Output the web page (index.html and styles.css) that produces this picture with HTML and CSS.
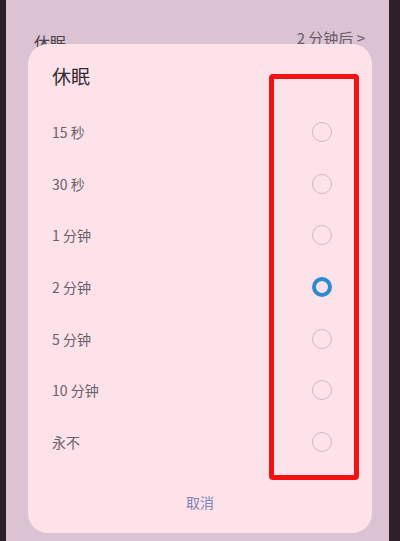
FILE: index.html
```html
<!DOCTYPE html>
<html lang="zh">
<head>
    <meta charset="UTF-8">
    <title>休眠</title>
    <link rel="stylesheet" href="styles.css">
</head>
<body>
    <div class="phone">
        <div class="bezel bezel-left"></div>
        <div class="screen">
            <div class="bg-row">
                <span>休眠</span>
                <span class="bg-value">2 分钟后 &gt;</span>
            </div>
        </div>
        <div class="bezel bezel-right"></div>
    </div>

    <div class="dialog">
        <div class="dialog-title">休眠</div>
        <div class="option"><span>15 秒</span><span class="radio"></span></div>
        <div class="option"><span>30 秒</span><span class="radio"></span></div>
        <div class="option"><span>1 分钟</span><span class="radio"></span></div>
        <div class="option"><span>2 分钟</span><span class="radio checked"></span></div>
        <div class="option"><span>5 分钟</span><span class="radio"></span></div>
        <div class="option"><span>10 分钟</span><span class="radio"></span></div>
        <div class="option"><span>永不</span><span class="radio"></span></div>
        <div class="cancel">取消</div>
    </div>

    <div class="highlight"></div>
</body>
</html>
```

FILE: styles.css
```css
body {
    margin: 0;
    width: 400px;
    height: 541px;
    overflow: hidden;
    position: relative;
    font-family: "Noto Sans CJK SC", "Noto Sans", sans-serif;
}
.phone {
    display: flex;
    height: 541px;
}
.bezel {
    background-color: #2b1f2a;
}
.bezel-left {
    width: 6px;
}
.bezel-right {
    width: 11px;
}
.screen {
    flex: 1;
    background-color: #dbc3d3;
    padding: 0 24px 0 28px;
}
.bg-row {
    display: flex;
    justify-content: space-between;
    font-size: 16px;
    color: #4d4049;
    line-height: 20px;
    margin-top: 32px;
}
.bg-value {
    font-size: 15px;
    color: #6a5b66;
    margin-top: -4px;
}
.dialog {
    position: absolute;
    left: 28px;
    right: 28px;
    top: 44px;
    bottom: 8px;
    background-color: #fde2ea;
    border-radius: 20px;
    padding: 20px 40px 0 24px;
    box-sizing: border-box;
}
.dialog-title {
    font-size: 19px;
    line-height: 24px;
    color: #342c31;
    margin-bottom: 18px;
}
.option {
    display: flex;
    align-items: center;
    justify-content: space-between;
    height: 51.7px;
    font-size: 14px;
    color: #6b6068;
}
.radio {
    width: 20px;
    height: 20px;
    border: 1px solid #cbb8c2;
    border-radius: 50%;
    box-sizing: border-box;
}
.checked {
    border: 4px solid #2c8ad0;
}
.cancel {
    text-align: center;
    font-size: 14px;
    line-height: 40px;
    margin-top: 14px;
    margin-right: -16px;
    color: #7a86b8;
}
.highlight {
    position: absolute;
    left: 269px;
    top: 74px;
    width: 90px;
    height: 406px;
    border: 5px solid #f21212;
    border-radius: 4px;
    box-sizing: border-box;
}
```
